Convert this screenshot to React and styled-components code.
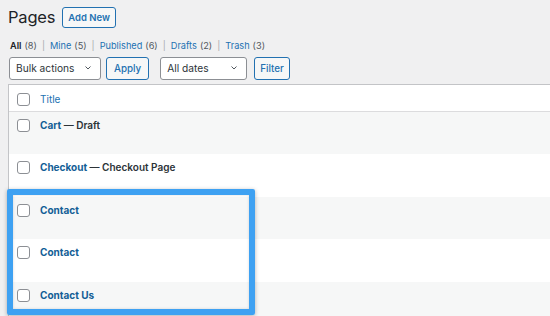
import React from 'react'
import styled, { createGlobalStyle } from 'styled-components'

const Global = createGlobalStyle`
  html, body {
    margin: 0;
    padding: 0;
    background: #f0f0f1;
    font-family: Inter, "Noto Sans", "Liberation Sans", sans-serif;
    color: #1d2327;
    overflow: hidden;
  }
`

const Page = styled.div`
  position: relative;
  width: 550px;
  height: 316px;
  padding-left: 8px;
  box-sizing: border-box;
  overflow: hidden;
`

const Head = styled.div`
  display: flex;
  align-items: center;
  gap: 7px;
  height: 34px;
`

const Heading = styled.h1`
  margin: 0 0 1px;
  font-size: 16.5px;
  font-weight: 400;
  letter-spacing: -0.2px;
`

const OutlineButton = styled.button`
  height: 21px;
  padding: 0 5px;
  border: 1px solid #2271b1;
  border-radius: 3px;
  background: #f6f7f7;
  color: #2271b1;
  font-family: inherit;
  font-size: 9.5px;
  font-weight: 600;
  cursor: pointer;
`

const Filters = styled.ul`
  display: flex;
  margin: 2px 0 0 2px;
  padding: 0;
  list-style: none;
  font-size: 9.2px;
  color: #50575e;
  height: 18px;
  align-items: center;
`

const FilterItem = styled.li`
  & + &::before {
    content: '|';
    color: #a7aaad;
    margin: 0 5px;
  }
`

const FilterLink = styled.a`
  color: ${p => (p.$current ? '#1d2327' : '#2271b1')};
  font-weight: ${p => (p.$current ? 600 : 400)};
  text-decoration: none;
`

const Count = styled.span`
  color: #50575e;
  margin-left: 3px;
`

const Tablenav = styled.div`
  display: flex;
  align-items: center;
  height: 26px;
  margin-top: 1px;
`

const Select = styled.div`
  display: flex;
  align-items: center;
  justify-content: space-between;
  box-sizing: border-box;
  width: ${p => p.$w}px;
  height: 23px;
  padding: 0 7px 0 6px;
  margin-left: 1px;
  border: 1px solid #8c8f94;
  border-radius: 3px;
  background: #fff;
  font-size: 10.2px;
  color: #2c3338;
`

const Apply = styled(OutlineButton)`
  height: 23px;
  margin-left: ${p => p.$gap}px;
  padding: 0 ${p => p.$pad}px;
  font-weight: 500;
  font-size: 9.8px;
`

const Spacer = styled.div`
  width: ${p => p.$w}px;
`

const Table = styled.div`
  margin-top: 3px;
  width: 600px;
  border: 1px solid #c3c4c7;
  background: #fff;
`

const HeadRow = styled.div`
  display: flex;
  align-items: center;
  height: 27px;
  box-sizing: border-box;
  padding: 2px 0 0 8px;
  border-bottom: 1px solid #dcdcde;
`

const Row = styled.div`
  display: flex;
  align-items: flex-start;
  height: 42.4px;
  box-sizing: border-box;
  padding: 6px 0 0 8px;
  background: ${p => (p.$alt ? '#f6f7f7' : '#fff')};
`

const Check = styled.span`
  flex: none;
  width: 11px;
  height: 11px;
  border: 1px solid #8c8f94;
  border-radius: 3px;
  background: #fff;
  margin-right: 10px;
  margin-top: ${p => (p.$top ? 0 : 1)}px;
`

const ColLink = styled.a`
  color: #2271b1;
  font-size: 10px;
  text-decoration: none;
`

const TitleText = styled.span`
  font-size: 10px;
  font-weight: 600;
  color: #2c3338;
  margin-top: 1px;
`

const RowTitle = styled.a`
  color: #135e96;
  font-weight: 700;
  text-decoration: none;
`

const Highlight = styled.div`
  position: absolute;
  left: 7px;
  top: 189px;
  width: 248px;
  height: 126px;
  box-sizing: border-box;
  border: 6px solid #3ea1f2;
  border-radius: 2px;
  box-shadow: 0 1px 4px rgba(0, 0, 0, 0.3), inset 0 0 3px rgba(0, 0, 0, 0.15);
  pointer-events: none;
`

const Chevron = () => (
  <svg width="10" height="10" viewBox="0 0 20 20">
    <path d="M5 7l5 5 5-5" fill="none" stroke="#50575e" strokeWidth="2" />
  </svg>
)

const filters = [
  ['All', 8, true],
  ['Mine', 5],
  ['Published', 6],
  ['Drafts', 2],
  ['Trash', 3]
]

const pages = [
  { title: 'Cart', state: 'Draft' },
  { title: 'Checkout', state: 'Checkout Page' },
  { title: 'Contact' },
  { title: 'Contact' },
  { title: 'Contact Us' }
]

export default function App() {
  return (
    <>
      <Global />
      <Page>
        <Head>
          <Heading>Pages</Heading>
          <OutlineButton>Add New</OutlineButton>
        </Head>
        <Filters>
          {filters.map(([name, n, cur]) => (
            <FilterItem key={name}>
              <FilterLink $current={cur}>{name}</FilterLink>
              <Count>({n})</Count>
            </FilterItem>
          ))}
        </Filters>
        <Tablenav>
          <Select $w={92}>
            Bulk actions <Chevron />
          </Select>
          <Apply $gap={5} $pad={7}>Apply</Apply>
          <Spacer $w={10} />
          <Select $w={87}>
            All dates <Chevron />
          </Select>
          <Apply $gap={7} $pad={5}>Filter</Apply>
        </Tablenav>
        <Table>
          <HeadRow>
            <Check $top />
            <ColLink>Title</ColLink>
          </HeadRow>
          {pages.map((p, i) => (
            <Row key={i} $alt={i % 2 === 0}>
              <Check />
              <TitleText>
                <RowTitle>{p.title}</RowTitle>
                {p.state ? ` — ${p.state}` : ''}
              </TitleText>
            </Row>
          ))}
        </Table>
        <Highlight />
      </Page>
    </>
  )
}
